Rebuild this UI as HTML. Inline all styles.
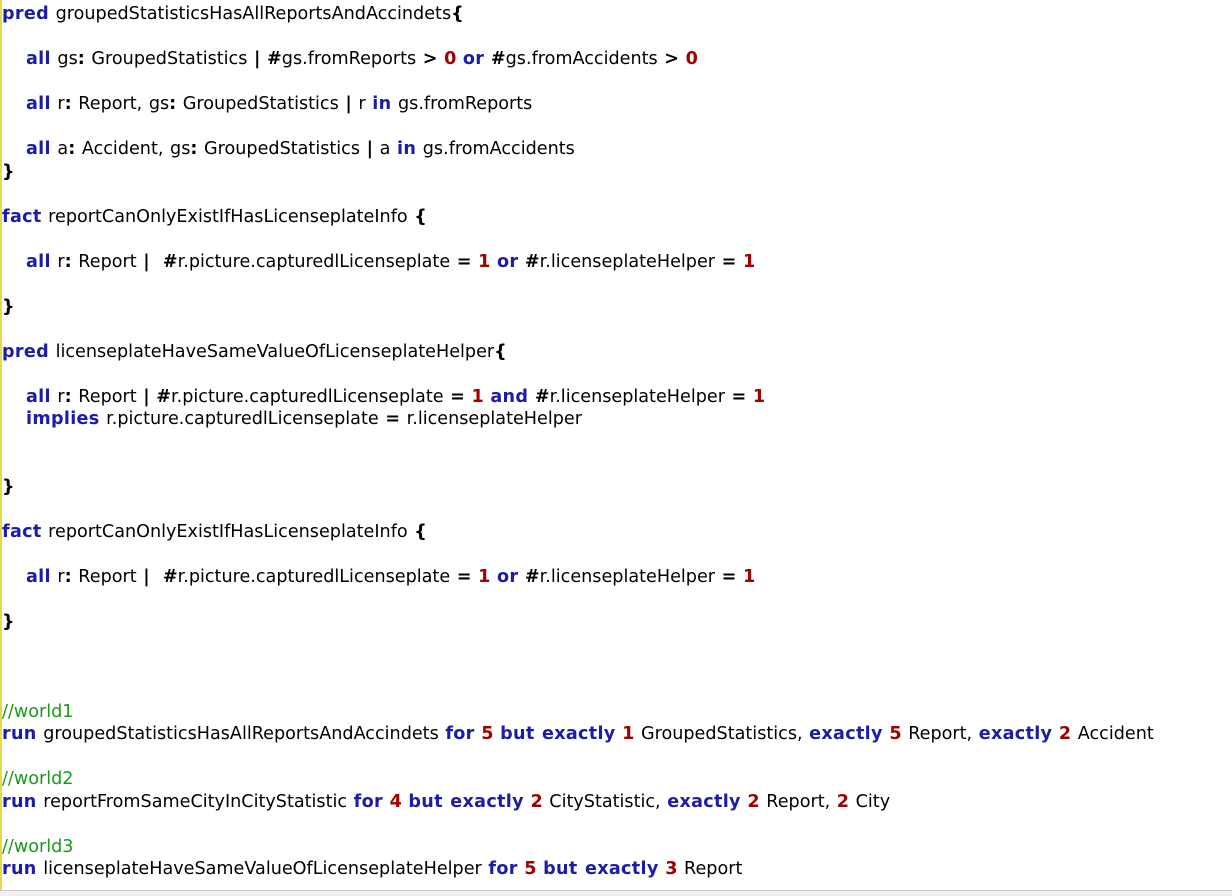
<!DOCTYPE html>
<html><head><style>
html,body{margin:0;padding:0;background:#fff;width:1232px;height:895px;overflow:hidden}
#ed{position:absolute;left:0;top:0;width:1232px;height:890px;border-left:2px solid #e8d84a;box-sizing:border-box}
#bot{position:absolute;left:0;top:890px;width:1232px;height:5px;background:#f0f0f0;border-top:1px solid #c8c8c8}
.l{position:absolute;left:2px;height:22.5px;line-height:22.5px;white-space:pre;font-family:"DejaVu Sans","Liberation Sans",sans-serif;font-size:17.6px;word-spacing:1px;color:#000}
.i{left:26px}
.k{color:#1c1ca8;font-weight:bold;letter-spacing:0.3px}
.n{color:#a00000;font-weight:bold}
.s{font-weight:bold}
.c{color:#1a9a1a}
</style></head><body>
<div id="ed"></div>
<div class="l" style="top:3px"><span class="k">pred</span> groupedStatisticsHasAllReportsAndAccindets<span class="s">{</span></div>
<div class="l i" style="top:48px"><span class="k">all</span> gs<span class="s">:</span> GroupedStatistics <span class="s">|</span> <span class="s">#</span>gs.fromReports <span class="s">&gt;</span> <span class="n">0</span> <span class="k">or</span> <span class="s">#</span>gs.fromAccidents <span class="s">&gt;</span> <span class="n">0</span></div>
<div class="l i" style="top:93px"><span class="k">all</span> r<span class="s">:</span> Report, gs<span class="s">:</span> GroupedStatistics <span class="s">|</span> r <span class="k">in</span> gs.fromReports</div>
<div class="l i" style="top:138px"><span class="k">all</span> a<span class="s">:</span> Accident, gs<span class="s">:</span> GroupedStatistics <span class="s">|</span> a <span class="k">in</span> gs.fromAccidents</div>
<div class="l" style="top:160.5px"><span class="s">}</span></div>
<div class="l" style="top:205.5px"><span class="k">fact</span> reportCanOnlyExistIfHasLicenseplateInfo <span class="s">{</span></div>
<div class="l i" style="top:250.5px"><span class="k">all</span> r<span class="s">:</span> Report <span class="s">|</span>  <span class="s">#</span>r.picture.capturedlLicenseplate <span class="s">=</span> <span class="n">1</span> <span class="k">or</span> <span class="s">#</span>r.licenseplateHelper <span class="s">=</span> <span class="n">1</span></div>
<div class="l" style="top:295.5px"><span class="s">}</span></div>
<div class="l" style="top:340.5px"><span class="k">pred</span> licenseplateHaveSameValueOfLicenseplateHelper<span class="s">{</span></div>
<div class="l i" style="top:385.5px"><span class="k">all</span> r<span class="s">:</span> Report <span class="s">|</span> <span class="s">#</span>r.picture.capturedlLicenseplate <span class="s">=</span> <span class="n">1</span> <span class="k">and</span> <span class="s">#</span>r.licenseplateHelper <span class="s">=</span> <span class="n">1</span></div>
<div class="l i" style="top:408px"><span class="k">implies</span> r.picture.capturedlLicenseplate <span class="s">=</span> r.licenseplateHelper</div>
<div class="l" style="top:475.5px"><span class="s">}</span></div>
<div class="l" style="top:520.5px"><span class="k">fact</span> reportCanOnlyExistIfHasLicenseplateInfo <span class="s">{</span></div>
<div class="l i" style="top:565.5px"><span class="k">all</span> r<span class="s">:</span> Report <span class="s">|</span>  <span class="s">#</span>r.picture.capturedlLicenseplate <span class="s">=</span> <span class="n">1</span> <span class="k">or</span> <span class="s">#</span>r.licenseplateHelper <span class="s">=</span> <span class="n">1</span></div>
<div class="l" style="top:610.5px"><span class="s">}</span></div>
<div class="l c" style="top:700.5px">//world1</div>
<div class="l" style="top:723px"><span class="k">run</span> groupedStatisticsHasAllReportsAndAccindets <span class="k">for</span> <span class="n">5</span> <span class="k">but exactly</span> <span class="n">1</span> GroupedStatistics, <span class="k">exactly</span> <span class="n">5</span> Report, <span class="k">exactly</span> <span class="n">2</span> Accident</div>
<div class="l c" style="top:768px">//world2</div>
<div class="l" style="top:790.5px"><span class="k">run</span> reportFromSameCityInCityStatistic <span class="k">for</span> <span class="n">4</span> <span class="k">but exactly</span> <span class="n">2</span> CityStatistic, <span class="k">exactly</span> <span class="n">2</span> Report, <span class="n">2</span> City</div>
<div class="l c" style="top:835.5px">//world3</div>
<div class="l" style="top:858px"><span class="k">run</span> licenseplateHaveSameValueOfLicenseplateHelper <span class="k">for</span> <span class="n">5</span> <span class="k">but exactly</span> <span class="n">3</span> Report</div>
<div id="bot"></div>
</body></html>
